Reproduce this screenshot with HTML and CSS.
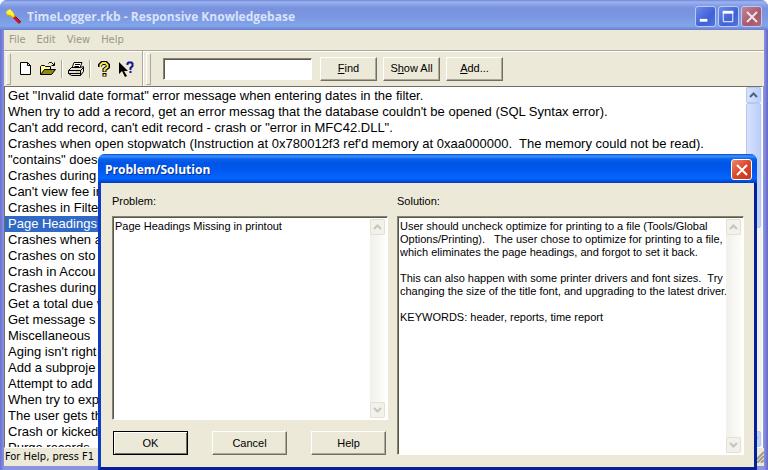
FILE: index.html
```html
<!DOCTYPE html>
<html lang="en">
<head>
<meta charset="utf-8">
<title>TimeLogger.rkb - Responsive Knowledgebase</title>
<link rel="stylesheet" href="styles.css">
</head>
<body>
<svg class="defs" aria-hidden="true">
  <symbol id="chev-up" viewBox="0 0 9 6"><path d="M1 5 4.500 1.500 8 5" fill="none" stroke="currentColor" stroke-width="2"/></symbol>
  <symbol id="chev-down" viewBox="0 0 9 6"><path d="M1 1 4.500 4.500 8 1" fill="none" stroke="currentColor" stroke-width="2"/></symbol>
  <symbol id="cross" viewBox="0 0 12 12"><path d="M1 1 11 11M11 1 1 11" fill="none" stroke="currentColor" stroke-width="2"/></symbol>
</svg>
<main class="window">
  <header class="titlebar">
    <svg class="app-icon" viewBox="0 0 16 16" aria-hidden="true">
      <path d="M8 8 14 14" stroke="#c4161c" stroke-width="3"/>
      <path d="M10 8 15 13" stroke="#7c1430" stroke-width="1"/>
      <path d="M0 3 2 1 4 0 7 3 9 7 7 9 4 7 1 6z" fill="#ffed18"/>
      <path d="M1 6 5 7 7 9 9 6" stroke="#c59a10" fill="none"/>
      <path d="M2 3 4 2 6 5" stroke="#fffba0" fill="none"/>
    </svg>
    <h1>TimeLogger.rkb - Responsive Knowledgebase</h1>
    <div class="captions">
      <button class="caption" aria-label="Minimize"><svg viewBox="0 0 20 20"><path d="M4 14h8" stroke="#fff" stroke-width="3"/></svg></button>
      <button class="caption" aria-label="Maximize"><svg viewBox="0 0 20 20"><path d="M4 5.500h11M4.500 5v10.500H14.500V5" fill="none" stroke="#fff"/><path d="M4 5.500h11" stroke="#fff" stroke-width="3"/></svg></button>
      <button class="caption caption-dim" aria-label="Close"><svg class="cross"><use href="#cross"/></svg></button>
    </div>
  </header>
  <nav class="menubar">
    <button>File</button><button>Edit</button><button>View</button><button>Help</button>
  </nav>
  <div class="toolbar">
    <div class="band icons">
      <button class="tool" aria-label="New"><svg viewBox="0 0 16 16"><path d="M2.500 1.500h7l3 3v9h-10z" fill="#fff" stroke="#000"/><path d="M9.500 1.500v3h3" fill="none" stroke="#000"/></svg></button>
      <button class="tool" aria-label="Open"><svg viewBox="0 0 16 16"><path d="M.5 13.500v-8l1-1h3l1 1h5v3" fill="#fff79a" stroke="#000"/><path d="M.5 13.500 4.500 8.500h11l-4 5z" fill="#8a8a12" stroke="#000"/><path d="M8.500 2.500 9.500 1.500h2l2.500 2.500M14.500 1.500v3h-3" fill="none" stroke="#000"/></svg></button>
      <span class="divider"></span>
      <button class="tool" aria-label="Print"><svg viewBox="0 0 16 16"><path d="M4 7 6 1.500h8l-2 5.500" fill="#fff" stroke="#000"/><path d="M7 3.500h5M6.500 5.500h4.500" stroke="#000"/><path d="M.5 9.500l3-3h9l3-1v5l-3 4h-9l-3-2z" fill="#e0dfd8" stroke="#000"/><path d="M.5 9.500h12l3-3M12.500 9.500v5M.5 12.500h12" fill="none" stroke="#000"/><path d="M8 11h3" stroke="#d9c715"/></svg></button>
      <span class="divider"></span>
      <button class="tool" aria-label="About"><svg viewBox="0 0 16 16"><path d="M4 6V4l2-2h4l2 2v2L8.500 8.500V11M8.500 12v3.500" fill="none" stroke="#000" stroke-width="4"/><path d="M4.500 6V4l2-2h3l2 2v2L8.500 8.500V10.500M8.500 13v2" fill="none" stroke="#f3e548" stroke-width="2"/></svg></button>
      <button class="tool" aria-label="Context help"><svg viewBox="0 0 16 16"><path d="M1 1v12l3-3 3 6 2-1-3-5h4z" fill="#000"/><path d="M9.500 4V2.500l1-1h3l1 1v2.500l-2 2v2M12.500 10v2" fill="none" stroke="#15158a" stroke-width="2"/></svg></button>
    </div>
    <div class="band search">
      <input class="query" type="text" aria-label="Search text">
      <button class="push"><span><u>F</u>ind</span></button>
      <button class="push"><span>S<u>h</u>ow All</span></button>
      <button class="push"><span><u>A</u>dd...</span></button>
    </div>
  </div>
  <div class="list-pane">
    <ul class="records" role="listbox" aria-label="Records">
      <li role="option">Get "Invalid date format" error message when entering dates in the filter.</li>
      <li role="option">When try to add a record, get an error messag that the database couldn't be opened (SQL Syntax error).</li>
      <li role="option">Can't add record, can't edit record - crash or "error in MFC42.DLL".</li>
      <li role="option">Crashes when open stopwatch (Instruction at 0x780012f3 ref'd memory at 0xaa000000.&nbsp; The memory could not be read).</li>
      <li role="option">"contains" does</li>
      <li role="option">Crashes during</li>
      <li role="option">Can't view fee in</li>
      <li role="option">Crashes in Filter</li>
      <li role="option" aria-selected="true">Page Headings Missing in printout</li>
      <li role="option">Crashes when a</li>
      <li role="option">Crashes on sto</li>
      <li role="option">Crash in Accou</li>
      <li role="option">Crashes during</li>
      <li role="option">Get a total due w</li>
      <li role="option">Get message s</li>
      <li role="option">Miscellaneous</li>
      <li role="option">Aging isn't right</li>
      <li role="option">Add a subproje</li>
      <li role="option">Attempt to add</li>
      <li role="option">When try to exp</li>
      <li role="option">The user gets th</li>
      <li role="option">Crash or kicked</li>
      <li role="option">Purge records</li>
    </ul>
    <div class="scroll">
      <button aria-label="Scroll up"><svg><use href="#chev-up"/></svg></button>
      <span class="thumb"></span>
      <button class="last" aria-label="Scroll down"><svg><use href="#chev-down"/></svg></button>
    </div>
  </div>
  <footer class="status">
    <span>For Help, press F1</span>
    <svg class="grip" viewBox="0 0 12 12" aria-hidden="true"><path d="M1 12 12 1M5 12 12 5M9 12 12 9" stroke="#a09d8c" stroke-width="2"/></svg>
  </footer>
</main>

<section class="dialog" role="dialog" aria-labelledby="dlg-title">
  <header class="dlg-title">
    <h2 id="dlg-title">Problem/Solution</h2>
    <button class="caption caption-red" aria-label="Close"><svg class="cross"><use href="#cross"/></svg></button>
  </header>
  <form class="dlg-body">
    <div class="column">
      <label for="problem">Problem:</label>
      <div class="field">
        <textarea id="problem" spellcheck="false">Page Headings Missing in printout</textarea>
        <div class="scroll off">
          <button type="button" aria-label="Scroll up"><svg><use href="#chev-up"/></svg></button>
          <button type="button" class="last" aria-label="Scroll down"><svg><use href="#chev-down"/></svg></button>
        </div>
      </div>
      <div class="actions">
        <button type="button" class="push default">OK</button>
        <button type="button" class="push">Cancel</button>
        <button type="button" class="push">Help</button>
      </div>
    </div>
    <div class="column">
      <label for="solution">Solution:</label>
      <div class="field">
        <textarea id="solution" spellcheck="false">User should uncheck optimize for printing to a file (Tools/Global
Options/Printing).   The user chose to optimize for printing to a file,
which eliminates the page headings, and forgot to set it back.

This can also happen with some printer drivers and font sizes.  Try
changing the size of the title font, and upgrading to the latest driver.

KEYWORDS: header, reports, time report</textarea>
        <div class="scroll off">
          <button type="button" aria-label="Scroll up"><svg><use href="#chev-up"/></svg></button>
          <button type="button" class="last" aria-label="Scroll down"><svg><use href="#chev-down"/></svg></button>
        </div>
      </div>
    </div>
  </form>
</section>
</body>
</html>
```
FILE: styles.css
```css
* { box-sizing: border-box; }
html, body { height: 100%; margin: 0; overflow: hidden; }
body {
  position: relative;
  background: #fff;
  color: #000;
  font: 11px/13px "Liberation Sans", Arial, sans-serif;
}
button, input, textarea { font: inherit; color: inherit; }
button { padding: 0; border: 0; background: none; }
h1, h2 { margin: 0; font: bold 12px/16px "Open Sans", "Noto Sans", sans-serif; }
.defs { display: none; }

/* Main window */
.window {
  display: flex;
  flex-direction: column;
  height: 100%;
  padding: 0 4px 4px;
  background: linear-gradient(90deg, #6a6fd0, #8a93e0 4px, #8a93e0 calc(100% - 4px), #6468c4);
  border-radius: 7px 7px 0 0;
}
.titlebar {
  display: flex;
  flex: none;
  align-items: center;
  gap: 5px;
  height: 30px;
  margin: 0 -4px;
  padding: 3px 6px 0;
  border-radius: 7px 7px 0 0;
  background: linear-gradient(#7385d6, #9bb5f2 2px, #8ca6ea 4px, #7a92dd 8px, #7b96e1 16px, #81a6ea 26px, #7690dc 28px, #6b7ccc);
  color: #d9e3fa;
}
.titlebar h1 { flex: 1; }
.app-icon { width: 16px; height: 16px; }
.captions { display: flex; gap: 2px; }
.caption {
  display: grid;
  place-items: center;
  width: 21px;
  height: 21px;
  border: 1px solid #b9c9f4;
  border-radius: 3px;
  background: linear-gradient(135deg, #6d8bea, #3f62d6 60%, #4c74e4);
  color: #fff;
}
.caption svg { width: 19px; height: 19px; }
.caption svg.cross { width: 12px; height: 12px; }
.caption-dim { background: linear-gradient(135deg, #c08698, #a8586c 60%, #b2667a); color: #f0e4ea; }
.caption-red { border-color: #fff; background: linear-gradient(135deg, #ec8a6c, #d9482a 50%, #c23a18); }

.menubar {
  display: flex;
  flex: none;
  gap: 11px;
  height: 20px;
  padding: 0 5px;
  background: #ece9d8;
  color: #9a9787;
  font: 11px/18px "DejaVu Sans Condensed", "DejaVu Sans", sans-serif;
}
.toolbar {
  display: flex;
  flex: none;
  height: 36px;
  background: #ece9d8;
  border-top: 1px solid #aca899;
  box-shadow: inset 0 1px #fff;
}
.band { display: flex; align-items: center; }
.band::before {
  content: "";
  width: 3px;
  height: 30px;
  border: 1px solid;
  border-color: #fff #aca899 #aca899 #fff;
}
.icons { padding-left: 2px; padding-right: 5px; border-right: 1px solid #aca899; box-shadow: 1px 0 #fff; }
.tool { width: 22px; height: 22px; display: grid; place-items: center; }
.tool svg { width: 16px; height: 16px; }
.icons::before { margin-right: 4px; }
.divider { width: 2px; height: 18px; margin: 0 2px; border-left: 1px solid #aca899; border-right: 1px solid #fff; }
.search { padding-left: 3px; gap: 6px; }
.search::before { margin-right: 6px; }
.query {
  width: 149px;
  height: 22px;
  margin-right: 2px;
  border: 1px solid;
  border-color: #85826f #fff #fff #85826f;
  box-shadow: inset 1px 1px #5a584c;
  background: #fff;
}
.push {
  width: 57px;
  height: 24px;
  border: 1px solid;
  border-color: #fff #716f64 #716f64 #fff;
  box-shadow: inset -1px -1px #aca899;
  background: #ece9d8;
}

.list-pane {
  display: flex;
  flex: 1;
  min-height: 0;
  margin-right: 1px;
  border: 1px solid;
  border-color: #716f64 #fff #fff #716f64;
  background: #fff;
}
.records {
  flex: 1;
  margin: 0;
  padding: 1px 0 0;
  overflow: hidden;
  list-style: none;
  font-size: 13px;
  line-height: 16px;
  white-space: nowrap;
}
.records li { padding-left: 3px; }
.records [aria-selected="true"] { background: #316ac5; color: #fff; }

.scroll { display: flex; flex-direction: column; width: 16px; background: #f3f3ee; color: #4d6185; }
.scroll button, .thumb {
  display: grid;
  place-items: center;
  width: 15px;
  height: 16px;
  border: 1px solid #b4c8f6;
  border-radius: 2px;
  background: linear-gradient(90deg, #d7e2fd, #bccffa);
}
.scroll svg { width: 9px; height: 6px; }
.thumb { height: 125px; }
.scroll .last { margin-top: auto; }
.off { color: #c6c5ba; background: linear-gradient(90deg, #f1f0ea, #fdfdfb); }
.off button { border-color: #e3e1d5; background: #f2f1ea; }

.status {
  display: flex;
  flex: none;
  align-items: center;
  justify-content: space-between;
  height: 18px;
  padding-left: 1px;
  background: #ece9d8;
  font: 11px/16px "DejaVu Sans Condensed", "DejaVu Sans", sans-serif;
}
.grip { width: 12px; height: 12px; }

/* Dialog window floating over the main one */
.dialog {
  position: absolute;
  inset: 154px 11px 0 98px;
  display: flex;
  flex-direction: column;
  border: 3px solid #0a2cb0;
  border-color: #0a50e0 #06209a #06209a #0a3cc8;
  border-top: 0;
  border-radius: 7px 7px 0 0;
  background: #ece9d8;
}
.dlg-title {
  display: flex;
  flex: none;
  align-items: center;
  justify-content: space-between;
  height: 29px;
  margin: 0 -3px;
  padding: 2px 5px 0 7px;
  border-radius: 7px 7px 0 0;
  background: linear-gradient(#0a46c8, #3d95ff 2px, #0a62ee 5px, #0055e5 9px, #0058ee 16px, #0366ff 24px, #0050dc 27px, #003cc0);
  color: #fff;
}
.dlg-title h2 { text-shadow: 1px 1px #0a2f90; }
.dlg-body {
  display: grid;
  flex: 1;
  grid-template-columns: 276px 1fr;
  gap: 9px;
  min-height: 0;
  padding: 12px 10px 12px 11px;
}
.column { display: flex; flex-direction: column; min-height: 0; }
.column label { margin-bottom: 8px; }
.field {
  display: flex;
  flex: 1;
  min-height: 0;
  border: 1px solid;
  border-color: #85826f #fff #fff #85826f;
  box-shadow: inset 1px 1px #5a584c;
  background: #fff;
  padding: 2px 1px 1px 2px;
}
.field textarea {
  flex: 1;
  min-width: 0;
  padding: 1px 0;
  border: 0;
  outline: 0;
  resize: none;
  overflow: hidden;
  background: none;
  white-space: pre;
}
.actions { display: flex; justify-content: space-between; padding: 11px 2px 0 1px; }
.actions .push { width: 75px; }
.actions .default { outline: 1px solid #000; outline-offset: -1px; border-color: #000; box-shadow: inset 1px 1px #fff, inset -1px -1px #716f64; }
```
